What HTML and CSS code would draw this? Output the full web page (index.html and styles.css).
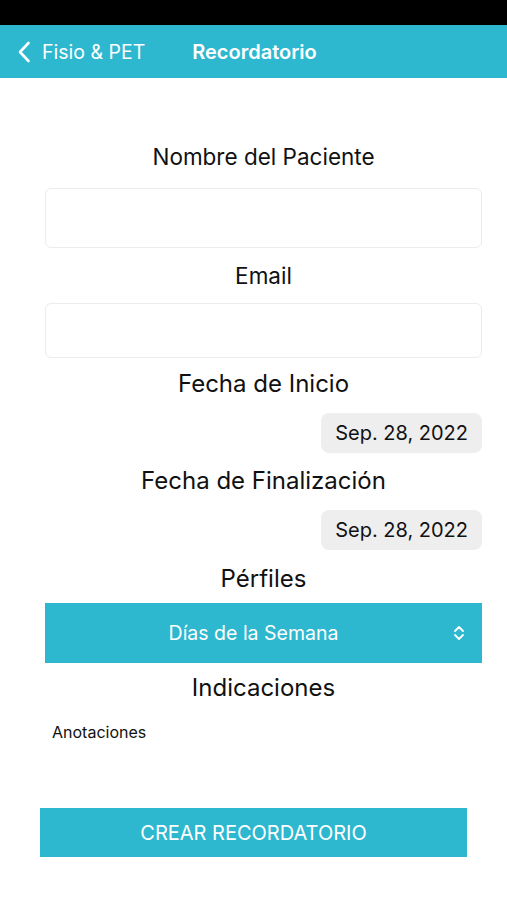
FILE: index.html
```html
<!DOCTYPE html>
<html lang="es">
<head>
<meta charset="UTF-8">
<meta name="viewport" content="width=device-width, initial-scale=1.0">
<title>Recordatorio</title>
<link rel="stylesheet" href="styles.css">
</head>
<body>

<div class="status-bar"></div>

<div class="nav-bar">
  <a class="back" href="#">
    <svg width="14" height="22" viewBox="0 0 14 22">
      <path d="M11.5 2 L3 11 L11.5 20" fill="none" stroke="#fff" stroke-width="2.6" stroke-linecap="round" stroke-linejoin="round"/>
    </svg>
    <span>Fisio &amp; PET</span>
  </a>
  <div class="nav-title">Recordatorio</div>
</div>

<div class="container">
  <form id="recordatorioForm">
    <label class="field-label first">Nombre del Paciente</label>
    <input type="text" class="field-input tall">

    <label class="field-label email">Email</label>
    <input type="email" class="field-input">

    <label class="field-label big">Fecha de Inicio</label>
    <div class="date-row">
      <span class="date-pill">Sep. 28, 2022</span>
    </div>

    <label class="field-label big after-date">Fecha de Finalización</label>
    <div class="date-row">
      <span class="date-pill">Sep. 28, 2022</span>
    </div>

    <label class="field-label big after-date perfiles">Pérfiles</label>
    <div class="select-box">
      <span>Días de la Semana</span>
      <svg class="select-icon" width="12" height="16" viewBox="0 0 12 16">
        <path d="M2 6 L6 2 L10 6 M2 10 L6 14 L10 10" fill="none" stroke="#fff" stroke-width="1.8" stroke-linecap="round" stroke-linejoin="round"/>
      </svg>
    </div>

    <label class="field-label big indicaciones">Indicaciones</label>
    <div class="notes">Anotaciones</div>

    <button type="button" class="submit">CREAR RECORDATORIO</button>
  </form>
</div>

</body>
</html>
```

FILE: styles.css
```css
body {
  margin: 0;
  padding: 0;
  font-family: Inter, "Noto Sans", Arial, sans-serif;
  background-color: #fff;
  color: #111;
  width: 507px;
}

.status-bar {
  height: 25px;
  background-color: #000;
}

.nav-bar {
  height: 53px;
  background-color: #2db8cf;
  display: flex;
  align-items: center;
  color: #fff;
}

.back {
  display: flex;
  align-items: center;
  color: #fff;
  text-decoration: none;
  font-size: 19.5px;
  padding-left: 17px;
  gap: 11px;
}

.back svg {
  display: block;
}

.nav-title {
  margin-left: 47px;
  font-size: 20px;
  font-weight: 600;
}

.container {
  padding: 0 25px 0 45px;
}

.field-label {
  display: block;
  text-align: center;
  font-size: 22.5px;
  line-height: 28px;
  margin: 12px 0 15px;
}

.field-label.first {
  margin-top: 65px;
  margin-bottom: 17px;
}

.field-label.email {
  margin-top: 14px;
  margin-bottom: 13px;
}

.field-label.big {
  font-size: 24px;
}

.field-label.after-date {
  margin-top: 14px;
}

.field-label.perfiles {
  margin-top: 15px;
}

.field-label.indicaciones {
  margin-top: 11px;
  margin-bottom: 0;
}

.field-input {
  display: block;
  box-sizing: border-box;
  width: 100%;
  height: 55px;
  border: 1px solid #ececec;
  border-radius: 6px;
  margin: 0;
}

.field-input.tall {
  height: 60px;
}

.date-row {
  display: flex;
  justify-content: flex-end;
}

.date-pill {
  background-color: #eeeeef;
  border-radius: 8px;
  height: 40px;
  padding: 0 14px;
  display: flex;
  align-items: center;
  font-size: 20px;
  color: #111;
}

.select-box {
  position: relative;
  height: 60px;
  background-color: #2db8cf;
  color: #fff;
  font-size: 19.5px;
  display: flex;
  align-items: center;
  justify-content: center;
  margin-top: -5px;
}

.select-box span {
  margin-left: -20px;
}

.select-icon {
  position: absolute;
  right: 17px;
  top: 22px;
}

.notes {
  font-size: 16px;
  line-height: 19px;
  margin: 21px 0 0 7px;
}

.submit {
  display: block;
  margin: 66px 0 0 -5px;
  width: 427px;
  height: 49px;
  background-color: #2db8cf;
  color: #fff;
  border: none;
  font-family: inherit;
  font-size: 20px;
  cursor: pointer;
}
```
